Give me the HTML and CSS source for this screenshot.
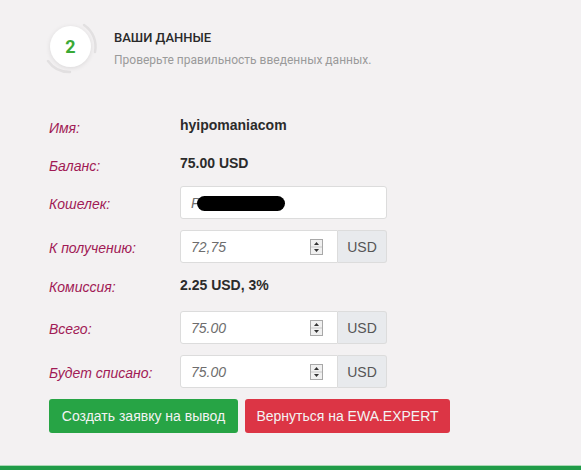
FILE: index.html
```html
<!DOCTYPE html>
<html lang="ru">
<head>
<meta charset="utf-8">
<link rel="stylesheet" href="styles.css">
</head>
<body>
<div class="page">
  <div class="header">
    <div class="step">
      <svg width="60" height="60" viewBox="0 0 60 60">
        <path d="M 44 9 A 26 26 0 0 1 55 36" fill="none" stroke="#e2e0e1" stroke-width="2.5" stroke-linecap="round"/>
        <path d="M 8 45 A 26 26 0 0 0 30 56" fill="none" stroke="#e2e0e1" stroke-width="2.5" stroke-linecap="round"/>
      </svg>
      <div class="step-circle">2</div>
    </div>
    <div class="head-text">
      <div class="title">ВАШИ ДАННЫЕ</div>
      <div class="subtitle">Проверьте правильность введенных данных.</div>
    </div>
  </div>

  <div class="form">
    <div class="row text-row first">
      <div class="label">Имя:</div>
      <div class="value">hyipomaniacom</div>
    </div>
    <div class="row text-row">
      <div class="label">Баланс:</div>
      <div class="value">75.00 USD</div>
    </div>
    <div class="row input-row">
      <div class="label">Кошелек:</div>
      <div class="input wide"><span class="itext">P</span><span class="redact"></span></div>
    </div>
    <div class="row input-row">
      <div class="label">К получению:</div>
      <div class="group">
        <div class="input num"><span class="itext">72,75</span>
          <svg class="spin" width="13" height="16" viewBox="0 0 13 16"><rect x="0.5" y="0.5" width="12" height="15" fill="#f0f0f0" stroke="#a8a8a8"/><line x1="1" y1="8" x2="12" y2="8" stroke="#c8c8c8"/><path d="M6.5 3 L9 6 L4 6 Z" fill="#333"/><path d="M6.5 13 L9 10 L4 10 Z" fill="#333"/></svg>
        </div>
        <div class="addon">USD</div>
      </div>
    </div>
    <div class="row text-row mid">
      <div class="label">Комиссия:</div>
      <div class="value">2.25 USD, 3%</div>
    </div>
    <div class="row input-row">
      <div class="label">Всего:</div>
      <div class="group">
        <div class="input num"><span class="itext">75.00</span>
          <svg class="spin" width="13" height="16" viewBox="0 0 13 16"><rect x="0.5" y="0.5" width="12" height="15" fill="#f0f0f0" stroke="#a8a8a8"/><line x1="1" y1="8" x2="12" y2="8" stroke="#c8c8c8"/><path d="M6.5 3 L9 6 L4 6 Z" fill="#333"/><path d="M6.5 13 L9 10 L4 10 Z" fill="#333"/></svg>
        </div>
        <div class="addon">USD</div>
      </div>
    </div>
    <div class="row input-row">
      <div class="label">Будет списано:</div>
      <div class="group">
        <div class="input num"><span class="itext">75.00</span>
          <svg class="spin" width="13" height="16" viewBox="0 0 13 16"><rect x="0.5" y="0.5" width="12" height="15" fill="#f0f0f0" stroke="#a8a8a8"/><line x1="1" y1="8" x2="12" y2="8" stroke="#c8c8c8"/><path d="M6.5 3 L9 6 L4 6 Z" fill="#333"/><path d="M6.5 13 L9 10 L4 10 Z" fill="#333"/></svg>
        </div>
        <div class="addon">USD</div>
      </div>
    </div>
    <div class="buttons">
      <div class="btn green">Создать заявку на вывод</div>
      <div class="btn red">Вернуться на EWA.EXPERT</div>
    </div>
  </div>
</div>
<div class="bottom-bar"></div>
</body>
</html>
```
FILE: styles.css
```css
html, body {
  margin: 0;
  padding: 0;
  background: #f3f1f2;
  height: 470px;
  overflow: hidden;
}
body {
  font-family: "Liberation Sans", Arial, sans-serif;
  position: relative;
}
.page {
  height: 465px;
}
.header {
  display: flex;
  align-items: center;
  padding: 16px 0 0 40px;
  height: 60px;
}
.step {
  position: relative;
  width: 60px;
  height: 60px;
}
.step svg {
  position: absolute;
  left: 0;
  top: 0;
}
.step-circle {
  position: absolute;
  left: 10px;
  top: 10px;
  width: 41px;
  height: 41px;
  border-radius: 50%;
  background: #fff;
  box-shadow: 0 1px 5px rgba(0,0,0,0.10);
  display: flex;
  align-items: center;
  justify-content: center;
  font-family: Roboto, "Liberation Sans", sans-serif;
  font-weight: 700;
  font-size: 18px;
  color: #3aa935;
}
.head-text {
  margin-left: 14px;
  font-family: Roboto, "Liberation Sans", sans-serif;
}
.title {
  font-size: 13px;
  font-weight: 500;
  color: #2a2a2a;
  margin-top: 4px;
}
.subtitle {
  font-size: 12px;
  color: #9a9a9a;
  margin-top: 8px;
}
.form {
  padding: 37px 0 0 49px;
}
.row {
  display: flex;
  align-items: center;
  margin-bottom: 11px;
}
.text-row {
  height: 24px;
  align-items: flex-start;
}
.text-row.first {
  height: 27px;
}
.text-row .label {
  margin-top: 7px;
}
.text-row .value {
  margin-top: 4px;
}
.mid {
  height: 26px;
}
.text-row.mid .label {
  margin-top: 5px;
}
.text-row.mid .value {
  margin-top: 3px;
}
.input-row {
  height: 33px;
}
.label {
  width: 131px;
  font-style: italic;
  font-size: 14px;
  line-height: 16px;
  color: #a11a55;
}
.input-row .label {
  padding-top: 3px;
}
.value {
  font-size: 14px;
  line-height: 16px;
  font-weight: 700;
  color: #2b2b2b;
}
.input {
  box-sizing: border-box;
  height: 33px;
  background: #fff;
  border: 1px solid #dcdcdc;
  border-radius: 3px;
  display: flex;
  align-items: center;
  padding-left: 10px;
}
.wide {
  width: 207px;
}
.itext {
  font-style: italic;
  font-size: 14px;
  color: #6d6d6d;
}
.redact {
  display: inline-block;
  width: 88px;
  height: 15px;
  background: #000;
  border-radius: 8px;
  margin-left: -3px;
  margin-top: 1px;
}
.group {
  display: flex;
  height: 33px;
}
.num {
  width: 158px;
  border-radius: 3px 0 0 3px;
  justify-content: space-between;
  padding-right: 14px;
}
.spin {
  display: block;
}
.addon {
  box-sizing: border-box;
  width: 49px;
  height: 33px;
  background: #e8eaed;
  border: 1px solid #dcdcdc;
  border-left: none;
  border-radius: 0 3px 3px 0;
  display: flex;
  align-items: center;
  justify-content: center;
  font-size: 14px;
  color: #555;
}
.buttons {
  display: flex;
  gap: 7px;
  margin-top: 5px;
}
.btn {
  height: 34px;
  box-sizing: border-box;
  display: flex;
  align-items: center;
  justify-content: center;
  white-space: nowrap;
  border-radius: 3px;
  font-size: 14px;
  color: #f3f3f3;
}
.green {
  background: #27a445;
  width: 189px;
}
.red {
  background: #dc3545;
  width: 205px;
}
.bottom-bar {
  position: absolute;
  left: 0;
  right: 0;
  bottom: 0;
  height: 4px;
  background: #1f9b48;
  border-top: 1px solid #a9d8b5;
}
```
